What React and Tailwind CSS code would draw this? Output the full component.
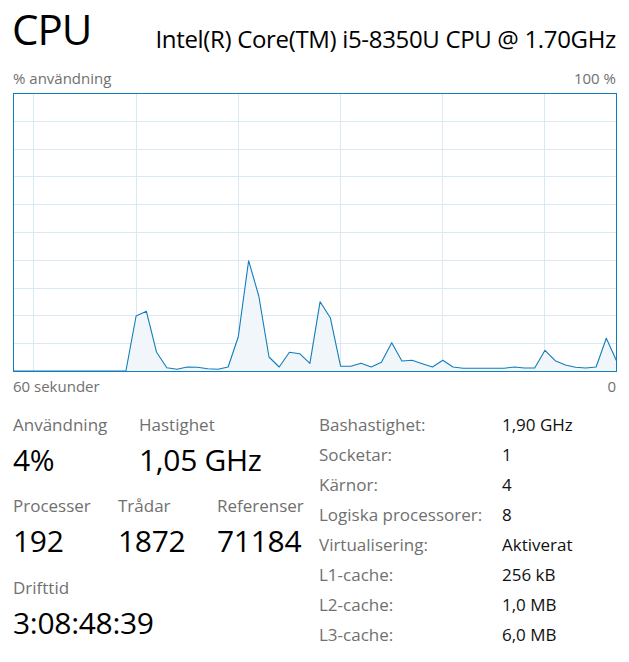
import React from 'react';

const samples = [
  0, 0, 0, 0, 0, 0, 0, 0, 0, 0, 0, 0,
  316, 311.3, 352.3, 367.7, 369.3, 367, 367.3, 368.7, 369.3, 367,
  336.7, 260.7, 296, 357, 367, 352.3, 353.7, 363.3, 301.7, 317.7,
  366.3, 366.3, 363.3, 367, 362.3, 342.7, 361, 360.3, 363.7, 367,
  360.3, 367, 368.3, 368.3, 368.3, 368.3, 368.3, 367, 368, 368,
  350.3, 360.7, 365, 367.3, 368, 367, 338.3, 360.7,
];

const W = 604;
const H = 279;

const UsageGraph = () => {
  const pts = samples.map((y, i) => {
    const x = (i * 603) / 59 + 0.5;
    const yy = y === 0 ? 278 : y - 93;
    return [x, yy];
  });
  const line = pts.map(([x, y]) => `${x.toFixed(1)},${y.toFixed(1)}`).join(' ');
  const area = `0.5,278 ${line} 603.5,278`;
  const rows = [1, 2, 3, 4, 5, 6, 7, 8, 9].map((k) => Math.round(k * 27.8) + 0.5);
  const cols = [20, 123, 225, 327, 429, 531].map((c) => c + 0.5);

  return (
    <svg width={W} height={H} viewBox={`0 0 ${W} ${H}`} className="block">
      <rect x="0" y="0" width={W} height={H} fill="#ffffff" />
      {rows.map((y) => (
        <line key={`r${y}`} x1="0" x2={W} y1={y} y2={y} stroke="#d9eaf4" strokeWidth="1" />
      ))}
      {cols.map((x) => (
        <line key={`c${x}`} x1={x} x2={x} y1="0" y2={H} stroke="#d9eaf4" strokeWidth="1" />
      ))}
      <polygon points={area} fill="#f1f6fa" />
      <polyline points={line} fill="none" stroke="#117dbb" strokeWidth="1.1" strokeLinejoin="round" />
      <rect x="0.5" y="0.5" width={W - 1} height={H - 1} fill="none" stroke="#117dbb" strokeWidth="1" />
    </svg>
  );
};

const Stat = ({ label, value, className = '' }) => (
  <div className={className}>
    <div className="text-[17px] leading-[24px] text-[#707070]">{label}</div>
    <div className="mt-[5px] text-[30px] leading-[36px] tracking-[-0.3px] text-black">{value}</div>
  </div>
);

const specs = [
  ['Bashastighet:', '1,90 GHz'],
  ['Socketar:', '1'],
  ['Kärnor:', '4'],
  ['Logiska processorer:', '8'],
  ['Virtualisering:', 'Aktiverat'],
  ['L1-cache:', '256 kB'],
  ['L2-cache:', '1,0 MB'],
  ['L3-cache:', '6,0 MB'],
];

export default function App() {
  return (
    <div className="w-[629px] h-[662px] bg-white overflow-hidden font-['Open_Sans',sans-serif]">
      <div className="flex h-[68px] justify-between pl-[12px] pr-[13px]">
        <div className="mt-[8px] text-[42px] leading-[42px] tracking-[-1px] text-black">CPU</div>
        <div className="mt-[27px] text-[24px] leading-[24px] tracking-[-0.33px] text-black">
          Intel(R) Core(TM) i5-8350U CPU @ 1.70GHz
        </div>
      </div>

      <div className="px-[13px]">
        <div className="flex justify-between text-[15px] leading-[20px] text-[#707070]">
          <span>% användning</span>
          <span>100 %</span>
        </div>
        <div className="mt-[5px]">
          <UsageGraph />
        </div>
        <div className="mt-[4px] flex justify-between text-[15px] leading-[20px] text-[#707070]">
          <span>60 sekunder</span>
          <span>0</span>
        </div>
      </div>

      <div className="mt-[17px] flex pl-[13px]">
        <div className="w-[306px]">
          <div className="flex">
            <Stat className="w-[126px]" label="Användning" value="4%" />
            <Stat label="Hastighet" value="1,05 GHz" />
          </div>
          <div className="mt-[16px] flex">
            <Stat className="w-[105px]" label="Processer" value="192" />
            <Stat className="w-[99px]" label="Trådar" value="1872" />
            <Stat label="Referenser" value="71184" />
          </div>
          <Stat className="mt-[17px]" label="Drifttid" value="3:08:48:39" />
        </div>

        <div className="-mt-[3px] text-[17px] leading-[30px]">
          {specs.map(([k, v]) => (
            <div key={k} className="flex">
              <span className="w-[183px] text-[#707070]">{k}</span>
              <span className="text-[#111111]">{v}</span>
            </div>
          ))}
        </div>
      </div>
    </div>
  );
}
